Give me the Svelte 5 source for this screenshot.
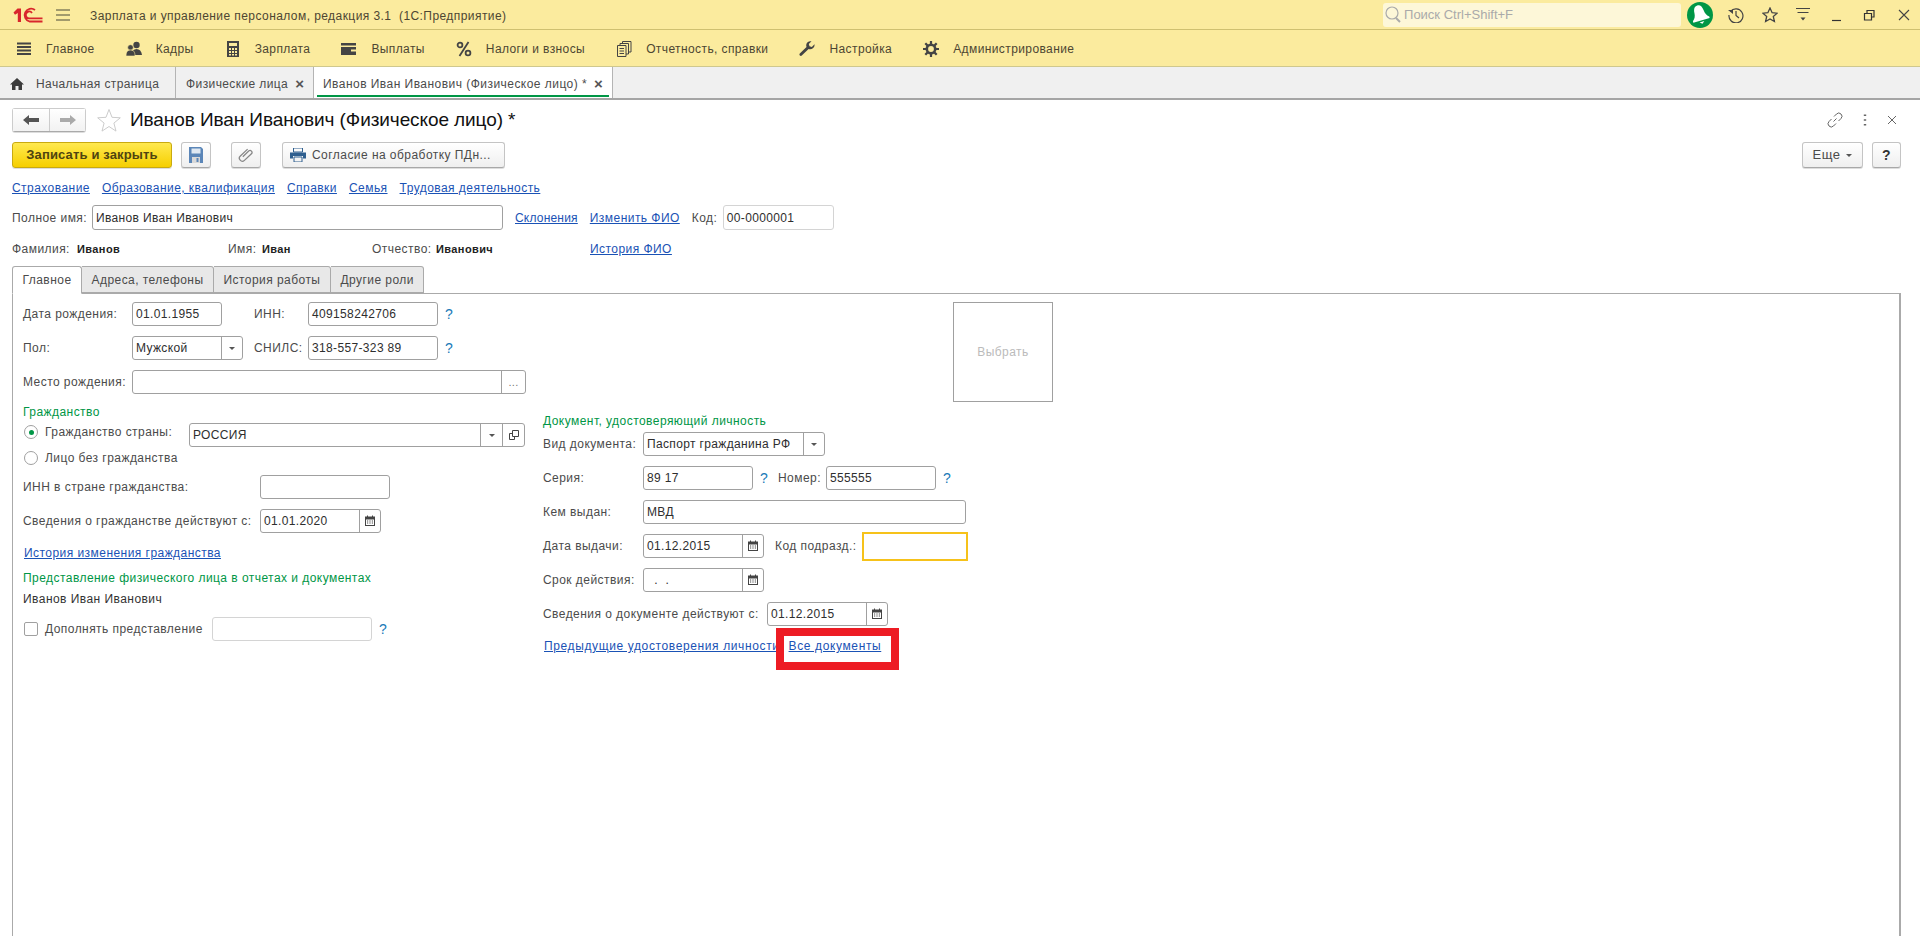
<script lang="ts">
  const menu = [
    { icon: 'lines', label: 'Главное' },
    { icon: 'people', label: 'Кадры' },
    { icon: 'calc', label: 'Зарплата' },
    { icon: 'wallet', label: 'Выплаты' },
    { icon: 'percent', label: 'Налоги и взносы' },
    { icon: 'docs', label: 'Отчетность, справки' },
    { icon: 'wrench', label: 'Настройка' },
    { icon: 'gear', label: 'Администрирование' }
  ];

  const links = ['Страхование', 'Образование, квалификация', 'Справки', 'Семья', 'Трудовая деятельность'];
  const formTabs = ['Главное', 'Адреса, телефоны', 'История работы', 'Другие роли'];
</script>

{#snippet menuIcon(name)}
  <svg class="menu-icon" viewBox="0 0 16 16" width="16" height="16">
    {#if name === 'lines'}
      <path d="M1 2.500h14M1 6h14M1 9.500h14M1 13h14" stroke="#444" stroke-width="2" fill="none" />
    {:else if name === 'people'}
      <circle cx="10.500" cy="4" r="3.200" fill="#444" />
      <path d="M6 14c0-4 1.500-6 4.500-6s5 2 5.500 6z" fill="#444" />
      <circle cx="4.500" cy="6.500" r="2.800" fill="#444" stroke="#fbeb9e" stroke-width=".6" />
      <path d="M0 15c0-4 1.500-6 4.500-6S9 11 9 15z" fill="#444" stroke="#fbeb9e" stroke-width=".6" />
    {:else if name === 'calc'}
      <path fill-rule="evenodd" d="M2 0h12v16H2zM4 2v3h8V2zM4 7v2h2V7zm3 0v2h2V7zm3 0v2h2V7zm-6 3v2h2v-2zm3 0v2h2v-2zm3 0v2h2v-2zm-6 3v1.500h2V13zm3 0v1.500h2V13zm3 0v1.500h2V13z" fill="#444" />
    {:else if name === 'wallet'}
      <path fill-rule="evenodd" d="M0 2h15v2.500H0zM0 6h15v8H0zm10 2.500v2h5v-2z" fill="#444" />
    {:else if name === 'percent'}
      <circle cx="4" cy="4" r="2.400" fill="none" stroke="#444" stroke-width="1.800" />
      <circle cx="12" cy="12" r="2.400" fill="none" stroke="#444" stroke-width="1.800" />
      <path d="M12.500 1 3.500 15" stroke="#444" stroke-width="1.800" />
    {:else if name === 'docs'}
      <path d="M1.500 4.500h8.500v11h-8.500zM4 4.500V2.500h8.500v10.500H10M6.500 2.500V.5H15v10.500h-2.500M3.500 7.500h4.500M3.500 10h4.500M3.500 12.500h4.500" fill="none" stroke="#444" />
    {:else if name === 'wrench'}
      <path d="M15.500 3.200 12.800 6 10.500 5.200 9.800 2.900 12.500.3C10 -.3 7.400 1.300 7.200 4c0 .8.100 1.400.3 1.900L.8 12.500c-1.200 1.300.7 3.200 2 2L9.600 8c2.800 1.100 6.600-1.100 5.900-4.800z" fill="#444" />
    {:else}
      <circle cx="8" cy="8" r="4.200" fill="none" stroke="#444" stroke-width="2.600" />
      <path d="M8 0v3M8 13v3M0 8h3M13 8h3M2.300 2.300l2.100 2.100M11.600 11.600l2.100 2.100M2.300 13.700l2.100-2.100M11.600 4.400l2.100-2.100" stroke="#444" stroke-width="2.200" />
    {/if}
  </svg>
{/snippet}

{#snippet calendar()}
  <svg viewBox="0 0 12 12" width="12" height="12">
    <path fill-rule="evenodd" d="M1 1.500h2V.5h1v1h4V.5h1v1h2V11H1zM2 4.500V10h8V4.500z" fill="#444" />
    <path d="M3 6h1.200M5.400 6h1.200M7.800 6H9M3 8h1.200M5.400 8h1.200M7.800 8H9" stroke="#444" />
  </svg>
{/snippet}

{#snippet field(value, size, buttons = [])}
  <div class="field {size}">
    <span class="value">{value}</span>
    {#each buttons as b}
      <span class="fbtn">
        {#if b === 'drop'}
          <i class="caret"></i>
        {:else if b === 'cal'}
          {@render calendar()}
        {:else if b === 'more'}
          <span class="dots">...</span>
        {:else}
          <svg viewBox="0 0 12 12" width="12" height="12">
            <path d="M4.500 1.500h6v6h-6zM4.500 4.500h-3v6h5v-3" fill="none" stroke="#444" />
          </svg>
        {/if}
      </span>
    {/each}
  </div>
{/snippet}

<div class="app">
  <header class="titlebar">
    <svg class="logo" viewBox="0 0 30 16" width="30" height="16">
      <path d="M.5 5.500 4.500 1.500H8V15H4.800V6L2 7.800z" fill="#d8262c" />
      <path d="M29.500 14.500H16.500A6.500 6.500 0 1 1 22 3M29.500 11.300H16.500A3.400 3.400 0 1 1 19 6" fill="none" stroke="#d8262c" stroke-width="1.800" />
    </svg>
    <svg class="burger" viewBox="0 0 14 12" width="14" height="12">
      <path d="M0 1h14M0 6h14M0 11h14" stroke="#4a4a3a" />
    </svg>
    <span class="app-name">Зарплата и управление персоналом, редакция 3.1&nbsp; (1С:Предприятие)</span>
    <div class="search">
      <svg viewBox="0 0 16 18" width="16" height="18">
        <circle cx="7" cy="7" r="6" fill="none" stroke="#aaa" stroke-width="1.200" />
        <path d="m11 12 4 4" stroke="#aaa" stroke-width="2" />
      </svg>
      <span>Поиск Ctrl+Shift+F</span>
    </div>
    <svg class="bell" viewBox="0 0 26 26" width="26" height="26">
      <circle cx="13" cy="13" r="13" fill="#009646" />
      <g transform="rotate(-16 13 13)">
        <path d="M13 3c-3 0-4.500 2.500-4.800 6.500-.3 3.500-1.200 5.500-3.700 7.500v1.500h17V17c-2.500-2-3.400-4-3.700-7.500C17.500 5.500 16 3 13 3z" fill="#fff" />
        <path d="M10.500 20h5l-2.500 2z" fill="#fff" />
      </g>
    </svg>
    <div class="sys">
      <svg viewBox="0 0 16 16" width="16" height="16">
        <path d="M2.500 4.500A7 7 0 1 1 1 8M8 4v4.500l3 2.500" fill="none" stroke="#444" stroke-width="1.200" />
        <path d="M0 3h5v4z" fill="#444" />
      </svg>
      <svg viewBox="0 0 16 16" width="16" height="16">
        <path d="m8 1 2.100 4.700 5 .5-3.800 3.300 1.100 5L8 11.900l-4.400 2.600 1.100-5L.9 6.200l5-.5z" fill="none" stroke="#444" stroke-width="1.300" />
      </svg>
      <svg viewBox="0 0 16 16" width="16" height="16">
        <path d="M1 1.500h14M2.500 5.500h11" stroke="#444" fill="none" />
        <path d="M5.500 10.500h5L8 13.500z" fill="#444" />
      </svg>
      <svg viewBox="0 0 16 16" width="16" height="16">
        <path d="M3 13.500h9" stroke="#333" stroke-width="1.200" />
      </svg>
      <svg viewBox="0 0 16 16" width="16" height="16">
        <path d="M2.500 6.500h7v6.500h-7zM5 6.500V3.500h7v6.500h-2.500" fill="none" stroke="#333" stroke-width="1.200" />
      </svg>
      <svg viewBox="0 0 16 16" width="16" height="16">
        <path d="m3 3 10 10M13 3 3 13" stroke="#444" stroke-width="1.100" />
      </svg>
    </div>
  </header>

  <nav class="menubar">
    {#each menu as m}
      <div class="menu-item">
        {@render menuIcon(m.icon)}
        <span>{m.label}</span>
      </div>
    {/each}
  </nav>

  <div class="tabbar">
    <div class="tab home">
      <svg viewBox="0 0 14 14" width="14" height="14">
        <path d="M7 1 0 7.500h2V13h3.500V9h3v4H12V7.500h2z" fill="#3c3c3c" />
      </svg>
      <span>Начальная страница</span>
    </div>
    <div class="tab list">
      <span>Физические лица</span>
      <i class="tab-x">×</i>
    </div>
    <div class="tab active">
      <span>Иванов Иван Иванович (Физическое лицо) *</span>
      <i class="tab-x">×</i>
    </div>
  </div>

  <main class="form">
    <div class="form-head">
      <div class="nav-btns">
        <button class="nav">
          <svg viewBox="0 0 16 12" width="16" height="12"><path d="M0 6 6 1v3h10v4H6v3z" fill="#555" /></svg>
        </button>
        <button class="nav">
          <svg viewBox="0 0 16 12" width="16" height="12"><path d="M16 6 10 1v3H0v4h10v3z" fill="#aaa" /></svg>
        </button>
      </div>
      <svg class="fav" viewBox="0 0 24 24" width="24" height="24">
        <path d="m12 1.500 3 7.800 8.300.5-6.400 5.300 2.100 8L12 18.500l-7 4.600 2.100-8L.7 9.800 9 9.300z" fill="none" stroke="#ccc" />
      </svg>
      <h1>Иванов Иван Иванович (Физическое лицо) *</h1>
      <div class="head-tools">
        <svg viewBox="0 0 16 16" width="16" height="16">
          <path d="M6.500 9.500 9.500 6.500M7 4.500l2.500-2.500a3 3 0 0 1 4.500 4.500L11.500 9M9 11.500 6.500 14A3 3 0 0 1 2 9.500L4.500 7" fill="none" stroke="#666" />
        </svg>
        <svg viewBox="0 0 4 14" width="4" height="14">
          <path d="M2 1.500v1.500M2 6.200v1.500M2 11v1.500" stroke="#666" stroke-width="2.400" />
        </svg>
        <svg viewBox="0 0 10 10" width="10" height="10">
          <path d="m1 1 8 8M9 1 1 9" stroke="#666" />
        </svg>
      </div>
    </div>

    <div class="commands">
      <button class="btn primary">Записать и закрыть</button>
      <button class="btn icon save">
        <svg viewBox="0 0 14 16" width="14" height="16">
          <path d="M0 0h12l2 2v14H0z" fill="#5b86b8" />
          <path d="M2.500 1.500h9v5h-9z" fill="#dfe8f2" />
          <path d="M3 10h8v6H3z" fill="#d9d9d9" />
          <path d="M7.500 11h2v4h-2z" fill="#5b86b8" />
        </svg>
      </button>
      <button class="btn icon clip">
        <svg viewBox="0 0 16 16" width="16" height="16">
          <path d="M5 10 10.500 3.500a2 2 0 0 1 3 2.500L7 13.500a3 3 0 0 1-4.500-4L9 2" transform="rotate(6 8 8)" fill="none" stroke="#888" stroke-width="1.300" />
        </svg>
      </button>
      <button class="btn print">
        <svg viewBox="0 0 16 14" width="16" height="14">
          <path d="M3.500 0h9v4h-9z" fill="none" stroke="#2f5f8f" />
          <path d="M0 4.500h16v6h-3V8H3v2.500H0z" fill="#2f5f8f" />
          <path d="M4 9h8v5H4z" fill="none" stroke="#2f5f8f" />
        </svg>
        Согласие на обработку ПДн...
      </button>
      <div class="spacer"></div>
      <button class="btn more">Еще <i class="caret"></i></button>
      <button class="btn help">?</button>
    </div>

    <div class="links">
      {#each links as l}
        <a href="#top">{l}</a>
      {/each}
    </div>

    <div class="name-row">
      <span class="lbl-full">Полное имя:</span>
      {@render field('Иванов Иван Иванович', 'w-411')}
      <a class="gap-sklon" href="#top">Склонения</a>
      <a class="gap-fio" href="#top">Изменить ФИО</a>
      <span class="lbl-code">Код:</span>
      <div class="field w-111 soft"><span class="value">00-0000001</span></div>
    </div>

    <div class="parts-row">
      <span class="part-fam">Фамилия:</span><b class="val-fam">Иванов</b>
      <span class="part-name">Имя:</span><b class="val-name">Иван</b>
      <span class="part-otch">Отчество:</span><b class="val-otch">Иванович</b>
      <a href="#top">История ФИО</a>
    </div>

    <div class="form-tabs">
      {#each formTabs as t, i}
        <div class="ftab" class:on={i === 0}>{t}</div>
      {/each}
    </div>

    <div class="panel">
      <section class="col-left">
        <div class="row">
          <span class="lbl">Дата рождения:</span>
          {@render field('01.01.1955', 'w-90')}
          <span class="lbl-inn">ИНН:</span>
          {@render field('409158242706', 'w-130')}
          <span class="q">?</span>
        </div>
        <div class="row">
          <span class="lbl">Пол:</span>
          {@render field('Мужской', 'w-111', ['drop'])}
          <span class="lbl-snils">СНИЛС:</span>
          {@render field('318-557-323 89', 'w-130')}
          <span class="q">?</span>
        </div>
        <div class="row">
          <span class="lbl">Место рождения:</span>
          {@render field('', 'w-394', ['more'])}
        </div>

        <div class="grp first">Гражданство</div>
        <div class="row radio-row">
          <span class="radio checked"></span>
          <span class="lbl-radio">Гражданство страны:</span>
          {@render field('РОССИЯ', 'w-336', ['drop', 'open'])}
        </div>
        <div class="row radio-row second">
          <span class="radio"></span>
          <span>Лицо без гражданства</span>
        </div>
        <div class="row">
          <span class="lbl-wide">ИНН в стране гражданства:</span>
          <div class="field w-130"></div>
        </div>
        <div class="row">
          <span class="lbl-wide">Сведения о гражданстве действуют с:</span>
          {@render field('01.01.2020', 'w-121', ['cal'])}
        </div>
        <div class="link-row"><a href="#top">История изменения гражданства</a></div>
        <div class="grp repr">Представление физического лица в отчетах и документах</div>
        <div class="repr-value">Иванов Иван Иванович</div>
        <div class="row extra">
          <span class="check"></span>
          <span class="lbl-check">Дополнять представление</span>
          <div class="field w-160 soft"></div>
          <span class="q">?</span>
        </div>
      </section>

      <section class="col-right">
        <div class="photo">Выбрать</div>
        <div class="grp doc">Документ, удостоверяющий личность</div>
        <div class="row">
          <span class="lbl-doc">Вид документа:</span>
          {@render field('Паспорт гражданина РФ', 'w-182', ['drop'])}
        </div>
        <div class="row">
          <span class="lbl-doc">Серия:</span>
          {@render field('89 17', 'w-110')}
          <span class="q">?</span>
          <span class="lbl-num">Номер:</span>
          {@render field('555555', 'w-110')}
          <span class="q">?</span>
        </div>
        <div class="row">
          <span class="lbl-doc">Кем выдан:</span>
          {@render field('МВД', 'w-323')}
        </div>
        <div class="row">
          <span class="lbl-doc">Дата выдачи:</span>
          {@render field('01.12.2015', 'w-121', ['cal'])}
          <span class="lbl-kod">Код подразд.:</span>
          <div class="kod"></div>
        </div>
        <div class="row">
          <span class="lbl-doc">Срок действия:</span>
          {@render field('\u00a0\u00a0.\u00a0\u00a0.', 'w-121', ['cal'])}
        </div>
        <div class="row">
          <span class="lbl-docdate">Сведения о документе действуют с:</span>
          {@render field('01.12.2015', 'w-121', ['cal'])}
        </div>
        <div class="link-row doc-links">
          <a href="#top">Предыдущие удостоверения личности</a>
          <span class="marked">
            <a href="#top">Все документы</a>
            <span class="red-frame"></span>
          </span>
        </div>
      </section>
    </div>
  </main>
</div>

<style>
  :global(body) {
    margin: 0;
    background: #fff;
  }

  .app {
    height: 936px;
    display: flex;
    flex-direction: column;
    overflow: hidden;
    font: 12px/16px "Liberation Sans", Arial, sans-serif;
    color: #4b4b4b;
  }

  svg {
    display: block;
    flex: none;
  }

  a {
    color: #1a52b5;
    text-decoration: underline;
  }

  /* title bar */
  .titlebar {
    height: 29px;
    flex: none;
    display: flex;
    align-items: center;
    background: #fbeb9e;
    border-bottom: 1px solid #cfc070;
    color: #4d4632;
  }

  .logo {
    margin-left: 13px;
  }

  .burger {
    margin-left: 13px;
  }

  .app-name {
    margin: 2px 0 0 20px;
    letter-spacing: 0.43px;
  }

  .search {
    margin-left: auto;
    width: 298px;
    height: 24px;
    box-sizing: border-box;
    display: flex;
    align-items: center;
    gap: 3px;
    background: #fdf7d8;
    border-radius: 3px;
    color: #aaa;
    padding-left: 2px;
    font-size: 13px;
  }

  .bell {
    margin-left: 6px;
  }

  .sys {
    display: flex;
    align-items: center;
    gap: 17.600px;
    margin: 0 8px 0 15px;
  }

  /* section menu */
  .menubar {
    height: 34px;
    padding: 2px 0 0 16px;
    flex: none;
    display: flex;
    align-items: center;
    gap: 31px;
    background: #fbeb9e;
    border-bottom: 1px solid #cfc88e;
    color: #4d4632;
  }

  .menu-item {
    display: flex;
    align-items: center;
    gap: 14px;
    letter-spacing: 0.4px;
  }

  /* open windows */
  .tabbar {
    height: 31px;
    flex: none;
    display: flex;
    background: #f0f0f0;
    border-bottom: 2px solid #a5a5a5;
  }

  .tab {
    display: flex;
    align-items: center;
    height: 31px;
    box-sizing: border-box;
    padding-top: 2px;
    border-right: 1px solid #b4b4b4;
    letter-spacing: 0.4px;
  }

  .home {
    width: 176px;
    padding-left: 10px;
    gap: 12px;
  }

  .list {
    width: 138px;
    padding-left: 10px;
  }

  .active {
    width: 299px;
    padding-left: 9px;
    background: #fff;
    position: relative;
    letter-spacing: 0.46px;
  }

  .active::after {
    content: "";
    position: absolute;
    left: 3px;
    right: 3px;
    bottom: 1px;
    height: 2px;
    background: #009646;
  }

  .tab-x {
    margin-left: 7px;
    font: bold 15px/16px "Liberation Sans", Arial, sans-serif;
    color: #555;
  }

  /* form */
  .form {
    flex: 1;
    min-height: 0;
    display: flex;
    flex-direction: column;
    padding: 0 19px 0 12px;
    background: #fff;
  }

  .form-head {
    height: 24px;
    margin-top: 8px;
    display: flex;
    align-items: center;
    flex: none;
  }

  .nav-btns {
    display: flex;
    border: 1px solid #ccc;
    border-bottom-color: #aaa;
    border-radius: 3px;
    box-shadow: 0 1px 0 #ddd;
  }

  .nav {
    width: 36px;
    height: 22px;
    padding: 0;
    border: 0;
    background: linear-gradient(#fff, #f2f2f2);
    display: flex;
    align-items: center;
    justify-content: center;
  }

  .nav + .nav {
    border-left: 1px solid #ccc;
  }

  .fav {
    margin-left: 11px;
  }

  h1 {
    margin: 0 0 0 9px;
    font: 19px/24px "Liberation Sans", Arial, sans-serif;
    letter-spacing: -0.09px;
    color: #111;
  }

  .head-tools {
    margin-left: auto;
    margin-right: 4px;
    display: flex;
    align-items: center;
    gap: 20px;
  }

  .commands {
    margin-top: 10px;
    display: flex;
    height: 26px;
    flex: none;
  }

  .btn {
    height: 26px;
    box-sizing: border-box;
    padding: 0;
    border: 1px solid #c4c4c4;
    border-bottom-color: #a8a8a8;
    border-radius: 3px;
    background: linear-gradient(#fff, #efefef);
    box-shadow: 0 1px 0 #ddd;
    font: 12px/16px "Liberation Sans", Arial, sans-serif;
    color: #4b4b4b;
    letter-spacing: 0.45px;
    display: flex;
    align-items: center;
    justify-content: center;
  }

  .primary {
    width: 160px;
    margin-right: 9px;
    border-color: #c9aa10;
    background: linear-gradient(#ffe94f, #f6cf00);
    color: #4f4410;
    font-size: 13px;
    font-weight: bold;
    letter-spacing: 0.15px;
  }

  .icon {
    width: 30px;
  }

  .save {
    margin-right: 20px;
  }

  .clip {
    margin-right: 21px;
  }

  .print {
    width: 223px;
    gap: 6px;
    justify-content: flex-start;
    padding-left: 7px;
  }

  .spacer {
    flex: 1;
  }

  .more {
    width: 61px;
    gap: 6px;
    margin-right: 9px;
    font-size: 13px;
  }

  .help {
    width: 29px;
    font-size: 14px;
    font-weight: bold;
    color: #333;
  }

  .caret {
    display: inline-block;
    width: 0;
    height: 0;
    border: 3px solid transparent;
    border-top: 3px solid #555;
    border-bottom: 0;
  }

  .links {
    margin-top: 12px;
    height: 16px;
    display: flex;
    gap: 12px;
    flex: none;
    letter-spacing: 0.45px;
  }

  .name-row {
    margin-top: 9px;
    height: 25px;
    display: flex;
    align-items: center;
    flex: none;
    letter-spacing: 0.45px;
  }

  .name-row .field {
    height: 25px;
  }

  .lbl-full {
    width: 80px;
  }

  .gap-sklon {
    margin-left: 12px;
    letter-spacing: 0.2px;
  }

  .gap-fio {
    margin-left: 12px;
  }

  .lbl-code {
    margin-left: 12px;
    width: 31px;
  }

  .parts-row {
    margin-top: 11px;
    height: 16px;
    display: flex;
    align-items: center;
    flex: none;
    letter-spacing: 0.45px;
  }

  .parts-row b {
    font-size: 11px;
    color: #222;
    letter-spacing: 0.4px;
  }

  .part-fam {
    width: 65px;
  }

  .val-fam {
    width: 151px;
  }

  .part-name {
    width: 34px;
  }

  .val-name {
    width: 110px;
  }

  .part-otch {
    width: 64px;
  }

  .val-otch {
    width: 154px;
  }

  .form-tabs {
    margin-top: 9px;
    display: flex;
    height: 27px;
    flex: none;
    position: relative;
    z-index: 1;
    letter-spacing: 0.45px;
  }

  .ftab {
    height: 27px;
    box-sizing: border-box;
    padding: 0 9.500px;
    display: flex;
    align-items: center;
    background: #e8e8e8;
    border: 1px solid #aaa;
    border-left: 0;
    border-radius: 0 3px 0 0;
  }

  .ftab.on {
    background: #fff;
    border-left: 1px solid #aaa;
    border-bottom: 1px solid #fff;
    height: 28px;
    border-radius: 3px 3px 0 0;
  }

  /* tab page */
  .panel {
    flex: 1;
    min-height: 0;
    display: flex;
    border: 1px solid #aaa;
    border-bottom: 0;
    border-width: 1px 2px 0 1px;
    padding: 8px 0 0 10px;
    letter-spacing: 0.45px;
    line-height: 17px;
  }

  .col-left {
    width: 520px;
    flex: none;
  }

  .col-right {
    flex: 1;
    min-width: 0;
  }

  .row {
    height: 24px;
    margin-bottom: 10px;
    display: flex;
    align-items: center;
  }

  .field {
    height: 24px;
    box-sizing: border-box;
    display: flex;
    align-items: center;
    flex: none;
    border: 1px solid #a0a0a0;
    border-radius: 3px;
    background: #fff;
    color: #2e2e2e;
    letter-spacing: 0.35px;
  }

  .field.soft {
    border-color: #d4d4d4;
  }

  .value {
    flex: 1;
    min-width: 0;
    padding-left: 3px;
    white-space: nowrap;
  }

  .fbtn {
    width: 20px;
    align-self: stretch;
    display: flex;
    align-items: center;
    justify-content: center;
    border-left: 1px solid #a0a0a0;
    flex: none;
  }

  .w-394 .fbtn {
    width: 23px;
  }

  .w-336 .fbtn {
    width: 21px;
  }

  .dots {
    color: #777;
    font-size: 11px;
  }

  .w-90 { width: 90px; }
  .w-110 { width: 110px; }
  .w-111 { width: 111px; }
  .w-121 { width: 121px; }
  .w-130 { width: 130px; }
  .w-160 { width: 160px; }
  .w-182 { width: 182px; }
  .w-323 { width: 323px; }
  .w-336 { width: 336px; }
  .w-394 { width: 394px; }
  .w-411 { width: 411px; }

  .lbl {
    width: 109px;
    flex: none;
  }

  .lbl-inn {
    width: 54px;
    margin-left: 32px;
  }

  .lbl-snils {
    width: 54px;
    margin-left: 11px;
  }

  .q {
    margin-left: 7px;
    width: 11px;
    color: #1a7ab8;
    font-size: 14px;
  }

  .grp {
    height: 16px;
    color: #009646;
    margin-bottom: 3px;
  }

  .grp.first {
    margin-top: 1px;
  }

  .radio-row {
    padding-left: 1px;
    margin-bottom: 0;
  }

  .radio-row.second {
    height: 22px;
    margin-bottom: 6px;
  }

  .radio {
    width: 14px;
    height: 14px;
    box-sizing: border-box;
    border: 1px solid #a0a0a0;
    border-radius: 50%;
    background: #fff;
    margin-right: 7px;
    flex: none;
    position: relative;
  }

  .radio.checked {
    align-self: flex-start;
    margin-top: 2px;
  }

  .radio.checked::after {
    content: "";
    position: absolute;
    left: 3.500px;
    top: 3.500px;
    width: 5px;
    height: 5px;
    border-radius: 50%;
    background: #009646;
  }

  .lbl-radio {
    width: 144px;
    align-self: flex-start;
    margin-top: 1px;
  }

  .lbl-wide {
    width: 237px;
    flex: none;
  }

  .link-row {
    height: 20px;
    line-height: 20px;
    padding-left: 1px;
  }

  .grp.repr {
    margin-top: 7px;
    margin-bottom: 3px;
  }

  .repr-value {
    height: 20px;
    line-height: 20px;
    color: #333;
  }

  .row.extra {
    margin-top: 8px;
    padding-left: 1px;
  }

  .check {
    width: 14px;
    height: 14px;
    box-sizing: border-box;
    border: 1px solid #a0a0a0;
    border-radius: 2px;
    margin-right: 7px;
    flex: none;
  }

  .lbl-check {
    width: 167px;
  }

  .photo {
    margin-left: 410px;
    width: 100px;
    height: 100px;
    box-sizing: border-box;
    border: 1px solid #a0a0a0;
    display: flex;
    align-items: center;
    justify-content: center;
    color: #bbb;
  }

  .grp.doc {
    margin-top: 11px;
  }

  .lbl-doc {
    width: 100px;
    flex: none;
  }

  .lbl-num {
    width: 48px;
    margin-left: 7px;
  }

  .lbl-kod {
    width: 87px;
    margin-left: 11px;
  }

  .kod {
    width: 106px;
    height: 29px;
    box-sizing: border-box;
    border: 2px solid #f6c21a;
    flex: none;
  }

  .lbl-docdate {
    width: 224px;
    flex: none;
  }

  .doc-links {
    display: flex;
    gap: 9px;
    letter-spacing: 0.62px;
  }

  .marked {
    position: relative;
  }

  .red-frame {
    position: absolute;
    left: -13px;
    right: -18px;
    top: -8px;
    bottom: -14px;
    border: 8px solid #ed1c24;
  }
</style>
